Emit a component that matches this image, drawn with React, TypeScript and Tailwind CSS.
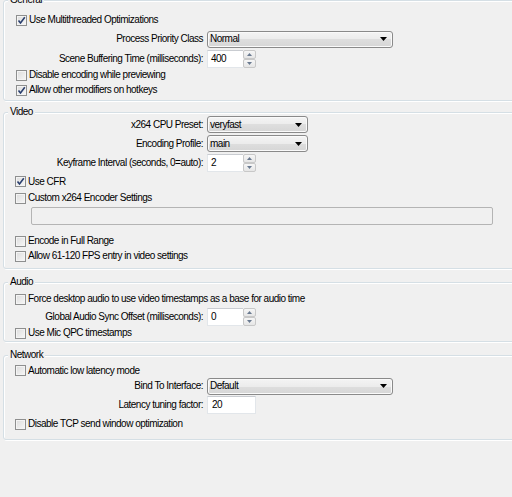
import type { ReactNode } from 'react'

const FONT = "font-['Liberation_Sans',Arial,sans-serif]"

interface GroupBoxProps {
  title: string
  className?: string
  children: ReactNode
}

// Etched Win7-style group box; the caption sits over the top border
function GroupBox({ title, className = '', children }: GroupBoxProps) {
  return (
    <div
      className={`relative w-[530px] rounded-[3px] border border-[#d5dfe5] shadow-[1px_1px_0_#fff,inset_1px_1px_0_#fff] ${className}`}
    >
      <span className="absolute top-[-7px] left-[4px] bg-[#f0f0f0] px-[2px] leading-[12px]">
        {title}
      </span>
      {children}
    </div>
  )
}

function CheckBox({ checked }: { checked?: boolean }) {
  return (
    <span className="relative flex h-[11px] w-[11px] shrink-0 items-center justify-center border border-[#8e8f8f] bg-[linear-gradient(135deg,#dcdcdc,#f7f7f7)] shadow-[inset_0_0_0_1px_#f4f4f4]">
      {checked && (
        <svg width="9" height="9" viewBox="0 0 9 9" className="absolute">
          <path
            d="M1.5 4.5 L3.5 7 L7.8 1.2"
            fill="none"
            stroke="#2a3f6e"
            strokeWidth="1.6"
          />
        </svg>
      )}
    </span>
  )
}

interface CheckRowProps {
  label: string
  checked?: boolean
  h: string
  offset?: string
}

function CheckRow({ label, checked, h, offset = 'ml-[11px]' }: CheckRowProps) {
  return (
    <div className={`flex items-center gap-[2px] ${h} ${offset}`}>
      <CheckBox checked={checked} />
      <span className="whitespace-nowrap leading-none">{label}</span>
    </div>
  )
}

interface FieldRowProps {
  label: string
  h: string
  children: ReactNode
}

function FieldRow({ label, h, children }: FieldRowProps) {
  return (
    <div className={`flex items-center ${h}`}>
      <span className="w-[199px] shrink-0 text-right whitespace-nowrap leading-none">
        {label}
      </span>
      <div className="ml-[4px] flex">{children}</div>
    </div>
  )
}

function Combo({ value, w }: { value: string; w: string }) {
  return (
    <div
      className={`flex h-[17px] ${w} items-center justify-between rounded-[3px] border border-[#8a8a8a] bg-[linear-gradient(#f4f4f4,#ececec_50%,#dedede_50%,#d6d6d6)] pr-[5px] pl-[2px] shadow-[inset_0_0_0_1px_#fafafa]`}
    >
      <span className="leading-none">{value}</span>
      <svg width="7" height="4" viewBox="0 0 7 4">
        <path d="M0 0 H7 L3.5 4 Z" fill="#000" />
      </svg>
    </div>
  )
}

function SpinArrow({ up }: { up?: boolean }) {
  return (
    <div className="flex h-[9px] w-[13px] items-center justify-center rounded-[2px] border border-[#c8c8c8] bg-[linear-gradient(#f6f6f6,#e6e6e6)]">
      <svg width="5" height="3" viewBox="0 0 5 3">
        <path d={up ? 'M0 3 H5 L2.5 0 Z' : 'M0 0 H5 L2.5 3 Z'} fill="#6a7a90" />
      </svg>
    </div>
  )
}

function SpinBox({ value }: { value: string }) {
  return (
    <div className="flex h-[18px] w-[49px]">
      <div className="flex flex-1 items-center border border-r-0 border-[#e2e6ea] border-t-[#c9ccd1] bg-white pl-[3px] leading-none">
        {value}
      </div>
      <div className="flex flex-col">
        <SpinArrow up />
        <SpinArrow />
      </div>
    </div>
  )
}

function TextBox({ value }: { value: string }) {
  return (
    <div className="flex h-[18px] w-[49px] items-center border border-[#e2e6ea] border-t-[#c9ccd1] bg-white pl-[4px] leading-none">
      {value}
    </div>
  )
}

export default function App() {
  return (
    <div
      className={`h-[497px] w-[512px] overflow-hidden bg-[#f0f0f0] pl-[3px] text-[10px] tracking-[-0.5px] text-black ${FONT}`}
    >
      <GroupBox title="General" className="pt-[10px] pb-[2px]">
        <CheckRow label="Use Multithreaded Optimizations" checked h="h-[18px]" offset="ml-[12px]" />
        <FieldRow label="Process Priority Class" h="h-[20px]">
          <Combo value="Normal" w="w-[186px]" />
        </FieldRow>
        <FieldRow label="Scene Buffering Time (milliseconds):" h="h-[19px]">
          <SpinBox value="400" />
        </FieldRow>
        <CheckRow label="Disable encoding while previewing" h="h-[14px]" offset="ml-[12px]" />
        <CheckRow label="Allow other modifiers on hotkeys" checked h="h-[16px]" offset="ml-[12px]" />
      </GroupBox>

      <GroupBox title="Video" className="mt-[11px] pt-[2px] pb-[5px]">
        <FieldRow label="x264 CPU Preset:" h="h-[19px]">
          <Combo value="veryfast" w="w-[101px]" />
        </FieldRow>
        <FieldRow label="Encoding Profile:" h="h-[19px]">
          <Combo value="main" w="w-[101px]" />
        </FieldRow>
        <FieldRow label="Keyframe Interval (seconds, 0=auto):" h="h-[20px]">
          <SpinBox value="2" />
        </FieldRow>
        <CheckRow label="Use CFR" checked h="h-[17px]" />
        <CheckRow label="Custom x264 Encoder Settings" h="h-[16px]" />
        <div className="flex h-[20px] items-center pl-[27px]">
          <div className="h-[18px] w-[462px] rounded-[2px] border border-[#b4b4b4] bg-[#f0f0f0]" />
        </div>
        <div className="mt-[7px]">
          <CheckRow label="Encode in Full Range" h="h-[16px]" />
          <CheckRow label="Allow 61-120 FPS entry in video settings" h="h-[14px]" />
        </div>
      </GroupBox>

      <GroupBox title="Audio" className="mt-[13px] pt-[8px] pb-[1px]">
        <CheckRow
          label="Force desktop audio to use video timestamps as a base for audio time"
          h="h-[16px]"
        />
        <FieldRow label="Global Audio Sync Offset (milliseconds):" h="h-[19px]">
          <SpinBox value="0" />
        </FieldRow>
        <CheckRow label="Use Mic QPC timestamps" h="h-[14px]" />
      </GroupBox>

      <GroupBox title="Network" className="mt-[13px] pt-[8px] pb-[6px]">
        <CheckRow label="Automatic low latency mode" h="h-[13px]" />
        <FieldRow label="Bind To Interface:" h="h-[18px]">
          <Combo value="Default" w="w-[186px]" />
        </FieldRow>
        <FieldRow label="Latency tuning factor:" h="h-[20px]">
          <TextBox value="20" />
        </FieldRow>
        <CheckRow label="Disable TCP send window optimization" h="h-[18px]" />
      </GroupBox>
    </div>
  )
}
